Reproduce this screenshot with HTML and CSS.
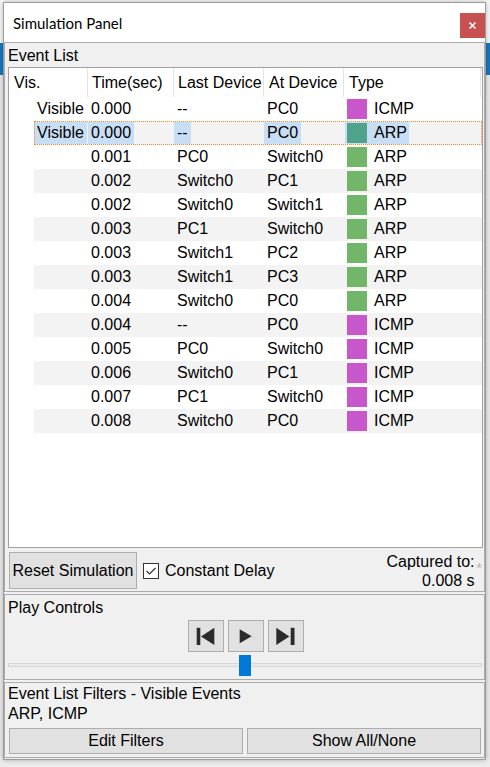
FILE: index.html
```html
<!DOCTYPE html>
<html lang="en">
<head>
<meta charset="utf-8">
<title>Simulation Panel</title>
<link rel="stylesheet" href="styles.css">
</head>
<body>
<div class="window">
  <div class="titlebar">
    <span class="title">Simulation Panel</span>
    <button class="close" aria-label="Close">
      <svg width="25" height="25" viewBox="0 0 25 25"><path d="M9.5 9.5 L15.5 15.5 M15.5 9.5 L9.5 15.5" stroke="#fff" stroke-width="1.6" fill="none"/></svg>
    </button>
  </div>

  <section class="group events">
    <div class="group-label">Event List</div>
    <div class="list">
      <div class="list-head">
        <div class="hcell">Vis.</div>
        <div class="hcell">Time(sec)</div>
        <div class="hcell">Last Device</div>
        <div class="hcell">At Device</div>
        <div class="hcell">Type</div>
      </div>
      <div class="list-body">
        <div class="row"><div class="cell"><span>Visible</span></div><div class="cell"><span>0.000</span></div><div class="cell"><span>--</span></div><div class="cell"><span>PC0</span></div><div class="cell type"><span><i class="sw icmp"></i>ICMP</span></div></div>
        <div class="row sel"><div class="cell"><span>Visible</span></div><div class="cell"><span>0.000</span></div><div class="cell"><span>--</span></div><div class="cell"><span>PC0</span></div><div class="cell type"><span><i class="sw arp"></i>ARP</span></div></div>
        <div class="row"><div class="cell"></div><div class="cell"><span>0.001</span></div><div class="cell"><span>PC0</span></div><div class="cell"><span>Switch0</span></div><div class="cell type"><span><i class="sw arp"></i>ARP</span></div></div>
        <div class="row"><div class="cell"></div><div class="cell"><span>0.002</span></div><div class="cell"><span>Switch0</span></div><div class="cell"><span>PC1</span></div><div class="cell type"><span><i class="sw arp"></i>ARP</span></div></div>
        <div class="row"><div class="cell"></div><div class="cell"><span>0.002</span></div><div class="cell"><span>Switch0</span></div><div class="cell"><span>Switch1</span></div><div class="cell type"><span><i class="sw arp"></i>ARP</span></div></div>
        <div class="row"><div class="cell"></div><div class="cell"><span>0.003</span></div><div class="cell"><span>PC1</span></div><div class="cell"><span>Switch0</span></div><div class="cell type"><span><i class="sw arp"></i>ARP</span></div></div>
        <div class="row"><div class="cell"></div><div class="cell"><span>0.003</span></div><div class="cell"><span>Switch1</span></div><div class="cell"><span>PC2</span></div><div class="cell type"><span><i class="sw arp"></i>ARP</span></div></div>
        <div class="row"><div class="cell"></div><div class="cell"><span>0.003</span></div><div class="cell"><span>Switch1</span></div><div class="cell"><span>PC3</span></div><div class="cell type"><span><i class="sw arp"></i>ARP</span></div></div>
        <div class="row"><div class="cell"></div><div class="cell"><span>0.004</span></div><div class="cell"><span>Switch0</span></div><div class="cell"><span>PC0</span></div><div class="cell type"><span><i class="sw arp"></i>ARP</span></div></div>
        <div class="row"><div class="cell"></div><div class="cell"><span>0.004</span></div><div class="cell"><span>--</span></div><div class="cell"><span>PC0</span></div><div class="cell type"><span><i class="sw icmp"></i>ICMP</span></div></div>
        <div class="row"><div class="cell"></div><div class="cell"><span>0.005</span></div><div class="cell"><span>PC0</span></div><div class="cell"><span>Switch0</span></div><div class="cell type"><span><i class="sw icmp"></i>ICMP</span></div></div>
        <div class="row"><div class="cell"></div><div class="cell"><span>0.006</span></div><div class="cell"><span>Switch0</span></div><div class="cell"><span>PC1</span></div><div class="cell type"><span><i class="sw icmp"></i>ICMP</span></div></div>
        <div class="row"><div class="cell"></div><div class="cell"><span>0.007</span></div><div class="cell"><span>PC1</span></div><div class="cell"><span>Switch0</span></div><div class="cell type"><span><i class="sw icmp"></i>ICMP</span></div></div>
        <div class="row"><div class="cell"></div><div class="cell"><span>0.008</span></div><div class="cell"><span>Switch0</span></div><div class="cell"><span>PC0</span></div><div class="cell type"><span><i class="sw icmp"></i>ICMP</span></div></div>
      </div>
    </div>
    <div class="list-actions">
      <button class="btn reset">Reset Simulation</button>
      <span class="check"><svg width="14" height="14" viewBox="0 0 14 14"><polyline points="2.5,7 5.5,10 11.5,4" fill="none" stroke="#333" stroke-width="1.2"/></svg></span>
      <span class="check-label">Constant Delay</span>
      <div class="captured">Captured to:<br>0.008 s</div>
      <span class="star">*</span>
    </div>
  </section>

  <section class="group play">
    <div class="group-label">Play Controls</div>
    <div class="transport">
      <button class="btn tbtn" aria-label="Back">
        <svg width="34" height="30" viewBox="0 0 34 30"><rect x="7.7" y="6.8" width="3.6" height="17.2" fill="#2b2b2b"/><polygon points="25.3,6.8 12,15.4 25.3,24" fill="#2b2b2b"/></svg>
      </button>
      <button class="btn tbtn" aria-label="Play">
        <svg width="34" height="30" viewBox="0 0 34 30"><polygon points="10.7,8.3 22.7,15.3 10.7,22.3" fill="#2b2b2b"/></svg>
      </button>
      <button class="btn tbtn" aria-label="Forward">
        <svg width="34" height="30" viewBox="0 0 34 30"><polygon points="7.3,6.8 20.3,15.4 7.3,24" fill="#2b2b2b"/><rect x="21.7" y="6.8" width="3.8" height="17.2" fill="#2b2b2b"/></svg>
      </button>
    </div>
    <div class="slider">
      <div class="track"></div>
      <div class="thumb"></div>
    </div>
  </section>

  <section class="group filters">
    <div class="filter-line">Event List Filters - Visible Events</div>
    <div class="filter-line">ARP, ICMP</div>
    <div class="filter-actions">
      <button class="btn fbtn">Edit Filters</button>
      <button class="btn fbtn">Show All/None</button>
    </div>
  </section>
</div>
</body>
</html>
```

FILE: styles.css
```css
* { box-sizing: border-box; }

html, body { height: 767px; }

body {
  margin: 0;
  overflow: hidden;
  font-family: "Liberation Sans", Arial, sans-serif;
  font-size: 16px;
  color: #000;
  background: linear-gradient(#f7f7f7 0 43px, #1479c4 43px 75px, #ececec 75px);
}

.window {
  margin: 2px 0 0 3px;
  width: 483px;
  border: 1px solid #9c9c9c;
  background: #f0f0f0;
  padding-bottom: 1px;
  box-shadow: 0 0 5px rgba(0, 0, 0, 0.28);
}

.titlebar {
  height: 39px;
  background: #fff;
  display: flex;
  justify-content: space-between;
  align-items: flex-start;
}

.title {
  font-family: Lato, "Noto Sans", sans-serif;
  font-size: 15px;
  line-height: 18px;
  margin: 11px 0 0 9px;
}

.close {
  width: 25px;
  height: 25px;
  margin-top: 10px;
  padding: 0;
  border: none;
  background: #c75050;
  display: grid;
  place-items: center;
}

.group {
  border: 1px solid #ababab;
  padding: 4px 1px 2px 3px;
}

.group-label { line-height: 18px; }

/* event list */
.list {
  margin-top: 2px;
  height: 481px;
  border: 1px solid #a0a0a0;
  background: #fff;
}

.list-head {
  display: grid;
  grid-template-columns: 79px 86px 90px 80px 137px;
  height: 29px;
}

.hcell {
  border-right: 1px solid #e5e5e5;
  padding-left: 5px;
  line-height: 29px;
  white-space: nowrap;
  overflow: hidden;
}
.hcell:nth-child(2),
.hcell:nth-child(3) { padding-left: 4px; }

.list-body { margin-left: 25px; }

.row {
  display: grid;
  grid-template-columns: 54px 86px 90px 80px 1fr;
  height: 24px;
  white-space: nowrap;
}
.row:nth-child(even) { background: #f3f3f3; }

.cell {
  display: flex;
  align-items: center;
  height: 24px;
}

.cell span {
  display: block;
  height: 22px;
  line-height: 22px;
  padding: 0 3px;
}

.cell.type { padding-left: 1px; }
.cell.type span {
  display: flex;
  align-items: center;
  gap: 7px;
  padding: 0 2px;
}

.sw {
  display: block;
  width: 20px;
  height: 20px;
}
.sw.icmp { background: #c757cb; }
.sw.arp { background: #72b66a; }

.row.sel {
  outline: 1px dotted #ef8a2f;
  outline-offset: -1px;
}
.row.sel .cell span { background: #c8def5; }
.row.sel .sw.arp { background: #4fa38b; }

/* actions under list */
.list-actions {
  display: flex;
  align-items: center;
  margin-top: 4px;
  height: 37px;
}

.btn {
  background: #e1e1e1;
  border: 1px solid #adadad;
  font: inherit;
  color: #000;
  padding: 0;
}

.reset {
  margin-left: 1px;
  width: 128px;
  height: 37px;
}

.check {
  margin-left: 6px;
  width: 16px;
  height: 16px;
  border: 1px solid #333;
  background: #fff;
  display: block;
}
.check svg { display: block; }

.check-label { margin-left: 6px; }

.captured {
  margin-left: auto;
  text-align: right;
  line-height: 19px;
}

.star {
  align-self: flex-start;
  margin: 9px 1px 0 2px;
  font-size: 14px;
  line-height: 14px;
  color: #b4b4b4;
}

/* play controls */
.play { margin-top: 2px; padding-bottom: 0; }

.transport {
  display: flex;
  justify-content: center;
  gap: 4px;
  margin-top: 3px;
}

.tbtn {
  width: 36px;
  height: 32px;
  display: grid;
  place-items: center;
}
.tbtn svg { display: block; }

.slider {
  position: relative;
  height: 27px;
}

.track {
  position: relative;
  top: 11px;
  height: 4px;
  margin-right: 1px;
  background: #e9ebeb;
  border: 1px solid #d6d6d6;
}

.thumb {
  position: absolute;
  left: 231px;
  top: 3px;
  width: 12px;
  height: 21px;
  background: #0078d7;
}

/* filters */
.filters {
  margin-top: 2px;
  padding-top: 1px;
  padding-bottom: 3px;
}

.filter-line { line-height: 20px; }

.filter-actions {
  display: grid;
  grid-template-columns: 1fr 1fr;
  gap: 4px;
  margin: 4px 2px 0 1px;
}

.fbtn { height: 26px; }
```
